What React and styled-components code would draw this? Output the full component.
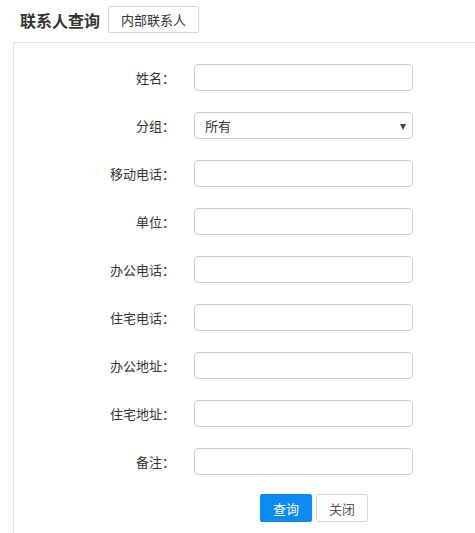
import React from "react";
import styled, { createGlobalStyle } from "styled-components";

const Global = createGlobalStyle`
  html, body { margin: 0; padding: 0; background: #fff; }
  body { font-family: "Microsoft YaHei", "Noto Sans CJK SC", "Noto Sans", sans-serif; color: #333; }
  * { box-sizing: border-box; }
`;

const Page = styled.div`
  width: 475px;
  height: 533px;
  overflow: hidden;
`;

const Header = styled.div`
  display: flex;
  align-items: center;
  height: 42px;
  padding: 0 0 3px 20px;
`;

const Title = styled.h1`
  margin: 0;
  font-size: 16px;
  font-weight: bold;
  color: #333;
  line-height: 20px;
`;

const TabButton = styled.button`
  margin-left: 8px;
  width: 91px;
  height: 27px;
  border: 1px solid #d5d5d5;
  border-radius: 2px;
  background: #fff;
  color: #333;
  font-family: inherit;
  font-size: 13px;
  padding: 0;
`;

const Panel = styled.div`
  margin-left: 13px;
  width: 480px;
  height: 500px;
  border-top: 1px solid #f0dde0;
  border-left: 1px solid #f0dde0;
  padding: 21px 0 0 0;
`;

const Form = styled.div`
  display: grid;
  grid-template-columns: 161px 219px;
  column-gap: 19px;
  row-gap: 21px;
  align-items: center;
`;

const Label = styled.label`
  text-align: right;
  font-size: 13px;
  color: #333;
`;

const Field = styled.input`
  width: 219px;
  height: 27px;
  border: 1px solid #ccc;
  border-radius: 4px;
  background: #fff;
  padding: 0 10px;
  font-family: inherit;
  font-size: 13px;
  outline: none;
`;

const SelectBox = styled.div`
  position: relative;
  width: 219px;
  height: 27px;
  border: 1px solid #ccc;
  border-radius: 4px;
  display: flex;
  align-items: center;
  padding: 0 10px;
  font-size: 13px;
  color: #333;
`;

const Caret = styled.span`
  position: absolute;
  right: 6px;
  top: 11px;
  width: 0;
  height: 0;
  border-left: 3.5px solid transparent;
  border-right: 3.5px solid transparent;
  border-top: 6px solid #444;
`;

const Actions = styled.div`
  display: flex;
  gap: 4px;
  margin: 19px 0 0 246px;
`;

const Btn = styled.button`
  width: 52px;
  height: 28px;
  border-radius: 2px;
  font-family: inherit;
  font-size: 13px;
  padding: 0;
  border: 1px solid ${(p) => (p.$primary ? "#0c8af5" : "#d5d5d5")};
  background: ${(p) => (p.$primary ? "#0c8af5" : "#fff")};
  color: ${(p) => (p.$primary ? "#fff" : "#555")};
`;

const fields = ["姓名", "分组", "移动电话", "单位", "办公电话", "住宅电话", "办公地址", "住宅地址", "备注"];

export default function App() {
  return (
    <Page>
      <Global />
      <Header>
        <Title>联系人查询</Title>
        <TabButton>内部联系人</TabButton>
      </Header>
      <Panel>
        <Form>
          {fields.map((f) => (
            <React.Fragment key={f}>
              <Label>{f}：</Label>
              {f === "分组" ? (
                <SelectBox>
                  所有
                  <Caret />
                </SelectBox>
              ) : (
                <Field />
              )}
            </React.Fragment>
          ))}
        </Form>
        <Actions>
          <Btn $primary>查询</Btn>
          <Btn>关闭</Btn>
        </Actions>
      </Panel>
    </Page>
  );
}
